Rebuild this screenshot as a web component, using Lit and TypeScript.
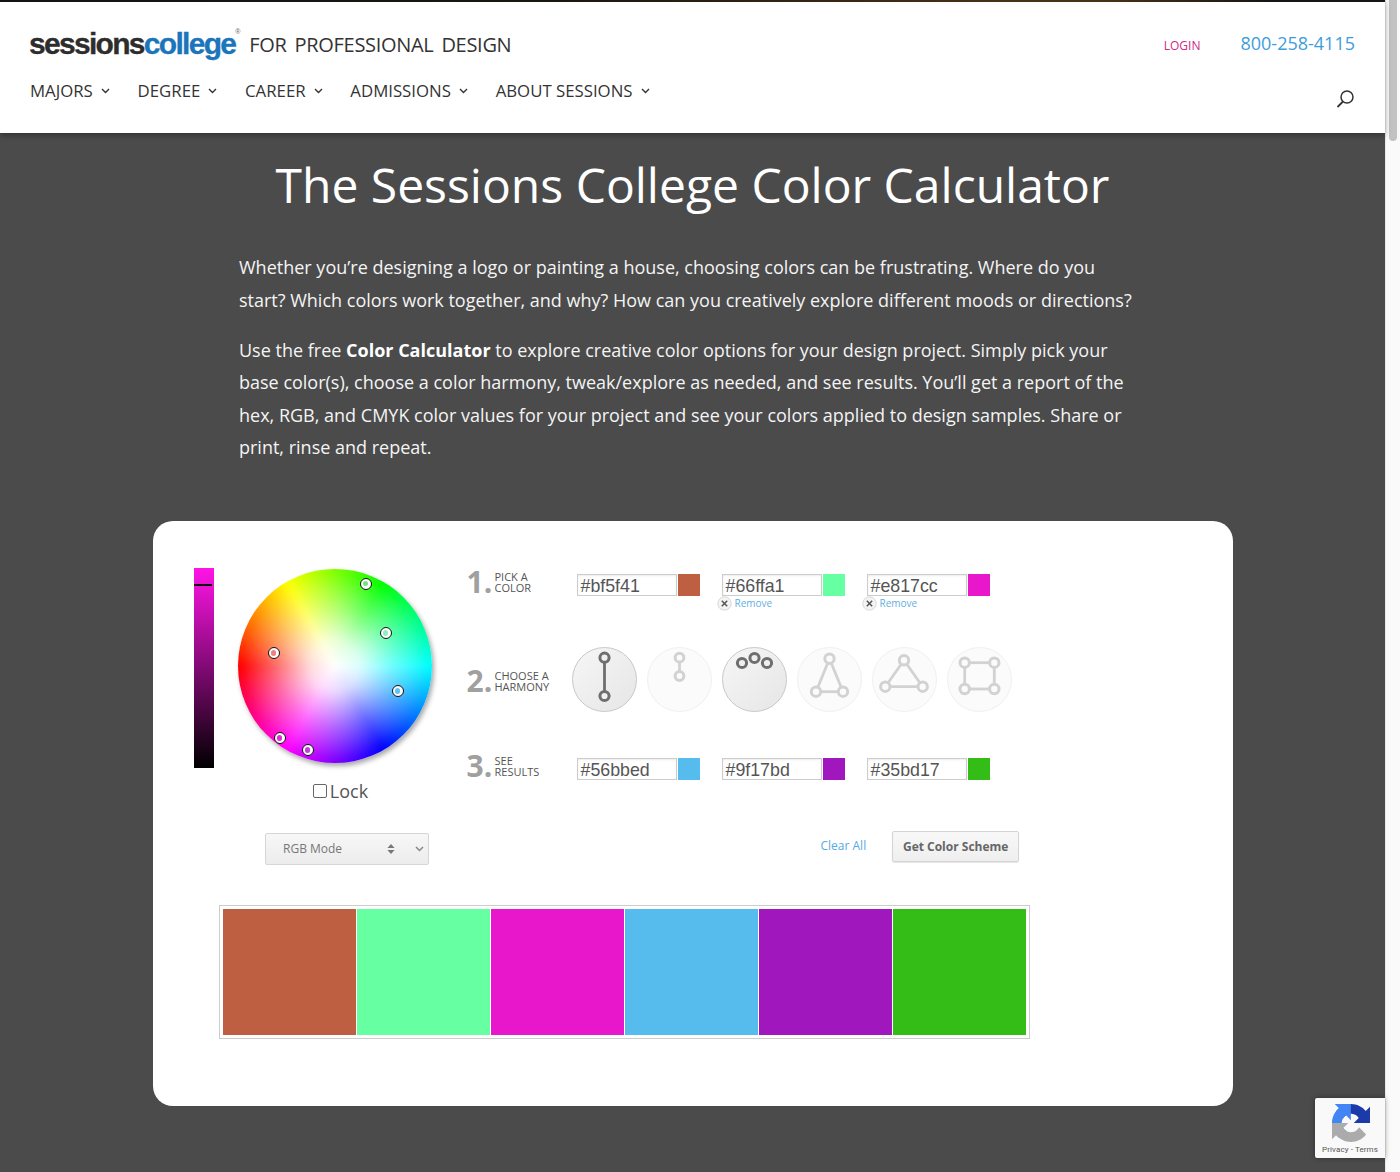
import { LitElement, html, css, svg } from "lit";
import { customElement } from "lit/decorators.js";

const NAV = ["MAJORS", "DEGREE", "CAREER", "ADMISSIONS", "ABOUT SESSIONS"];
const PICK = [
  { hex: "#bf5f41", remove: false },
  { hex: "#66ffa1", remove: true },
  { hex: "#e817cc", remove: true },
];
const RESULT = ["#56bbed", "#9f17bd", "#35bd17"];
const PALETTE = ["#bf5f41", "#66ffa1", "#e817cc", "#56bbed", "#9f17bd", "#35bd17"];
const DOTS = [
  { x: 128, y: 14.5, c: "#72e27c" },
  { x: 148, y: 64, c: "#8ff0bc" },
  { x: 36, y: 84, c: "#ee8080" },
  { x: 160, y: 122, c: "#62c4f0" },
  { x: 42, y: 169, c: "#e02cd0" },
  { x: 70, y: 181, c: "#c23ce0" },
];

const node = (x: number, y: number, r: number, fill: string) =>
  svg`<circle cx=${x} cy=${y} r=${r} fill=${fill} stroke="currentColor" stroke-width="3"/>`;
const line = (a: number, b: number, c: number, d: number) =>
  svg`<line x1=${a} y1=${b} x2=${c} y2=${d} stroke="currentColor" stroke-width="2.8"/>`;

const ON = "#efefef";
const OFF = "#fbfbfb";
const HARMONIES = [
  { active: true, art: svg`${line(32.5, 10.7, 32.5, 49)}${node(32.5, 10.7, 4.6, ON)}${node(32.5, 49, 4.6, ON)}` },
  { active: false, art: svg`${line(32.5, 10.7, 32.5, 29)}${node(32.5, 10.7, 4.4, OFF)}${node(32.5, 29, 4.4, OFF)}` },
  { active: true, art: svg`${node(20, 16, 4.6, ON)}${node(32.5, 11, 4.6, ON)}${node(45, 16, 4.6, ON)}` },
  { active: false, art: svg`${line(32.5, 11.7, 19, 44.7)}${line(32.5, 11.7, 46, 44.7)}${line(19, 44.7, 46, 44.7)}${node(32.5, 11.7, 4.7, OFF)}${node(19, 44.7, 4.7, OFF)}${node(46, 44.7, 4.7, OFF)}` },
  { active: false, art: svg`${line(32, 13.3, 13.3, 39.7)}${line(32, 13.3, 50.7, 39.7)}${line(13.3, 39.7, 50.7, 39.7)}${node(32, 13.3, 4.7, OFF)}${node(13.3, 39.7, 4.7, OFF)}${node(50.7, 39.7, 4.7, OFF)}` },
  { active: false, art: svg`${line(17.7, 15.7, 47.3, 15.7)}${line(17.7, 42, 47.3, 42)}${line(17.7, 15.7, 17.7, 42)}${line(47.3, 15.7, 47.3, 42)}${node(17.7, 15.7, 4.7, OFF)}${node(47.3, 15.7, 4.7, OFF)}${node(17.7, 42, 4.7, OFF)}${node(47.3, 42, 4.7, OFF)}` },
];

@customElement("app-root")
export class AppRoot extends LitElement {
  static styles = css`
    :host {
      display: flex;
      position: relative;
      width: 1400px;
      height: 1172px;
      overflow: hidden;
      font-family: "Open Sans", "Liberation Sans", sans-serif;
      background: #4b4b4b;
    }
    .page { width: 1385px; flex: none; }
    .scrollbar {
      width: 15px;
      flex: none;
      box-sizing: border-box;
      background: #fafafa;
      border-left: 1px solid #e8e8e8;
      padding-left: 3px;
    }
    .thumb { width: 8px; height: 141px; border-radius: 0 0 5px 5px; background: #c2c2c2; }

    header {
      position: relative;
      box-sizing: border-box;
      height: 133px;
      background: #fff;
      box-shadow: 0 2px 6px rgba(0, 0, 0, 0.35);
      padding: 0 30px;
    }
    .strip {
      height: 2px;
      margin: 0 -30px;
      background: linear-gradient(90deg, #141414, #1a1610 40%, #4a3016 72%, #4a3016 80%, #151515 92%);
    }
    .head-top { display: flex; align-items: center; height: 62px; padding-top: 20px; box-sizing: border-box; }
    .logo {
      font-family: "Liberation Sans", sans-serif;
      font-weight: 700;
      font-size: 30px;
      letter-spacing: -1.7px;
      color: #2d2d2d;
      line-height: 30px;
      position: relative;
      margin: 2px 0 0 -1px;
      -webkit-text-stroke: 0.3px currentColor;
    }
    .logo b { color: #1b75bb; font-weight: 700; }
    .logo sup { font-size: 7px; letter-spacing: 0; color: #666; position: absolute; top: -2px; right: -5px; line-height: 10px; font-weight: 400; -webkit-text-stroke: 0; }
    .tag { font-size: 20px; color: #333; margin-left: 14px; word-spacing: 3px; line-height: 30px; letter-spacing: -0.3px; margin-top: 4px; }
    .login { margin-left: auto; font-size: 12px; color: #cf2a85; margin-top: 4px; }
    .phone { margin-left: 40px; font-size: 18px; color: #3e9ddb; margin-top: -1px; }
    nav { display: flex; gap: 27.75px; align-items: center; height: 24px; margin-top: 14px; }
    .nav-item { display: flex; align-items: center; gap: 8px; font-size: 16.8px; color: #333; }
    .nav-item svg { width: 9px; height: 6px; margin-top: 1px; }
    .search { position: absolute; right: 30px; top: 89px; width: 19px; height: 19px; }

    main { display: flex; flex-direction: column; align-items: center; }
    h1 {
      margin: 19px 0 0;
      font-weight: 400;
      font-size: 48px;
      line-height: 65px;
      color: #fff;
      text-align: center;
    }
    .intro { width: 907px; margin-top: 34.4px; color: #f4f4f4; font-size: 18px; line-height: 32.4px; }
    .intro p { margin: 0 0 17.5px; }
    .intro strong { font-weight: 700; color: #fff; }

    .card {
      box-sizing: border-box;
      width: 1080px;
      height: 585px;
      margin-top: 40.2px;
      border-radius: 20px;
      background: #fff;
      padding: 47px 41px 0;
    }
    .tool { display: flex; height: 263px; }
    .value {
      position: relative;
      width: 20px;
      height: 200px;
      flex: none;
      background: linear-gradient(#ff14e6, #000);
    }
    .value i { position: absolute; left: 0; top: 16px; width: 18px; height: 1.5px; background: #111; }
    .wheel-col { margin-left: 24px; width: 194px; flex: none; display: flex; flex-direction: column; align-items: center; }
    .wheel {
      position: relative;
      width: 194px;
      height: 194px;
      margin-top: 1px;
      border-radius: 50%;
      box-shadow: 2px 3px 5px rgba(0, 0, 0, 0.35);
    }
    .hues {
      position: absolute;
      inset: 0;
      overflow: hidden;
      border-radius: 50%;
    }
    .hues::before {
      content: "";
      position: absolute;
      inset: -8px;
      background:
        radial-gradient(circle closest-side, #fff 0%, rgba(255, 255, 255, 0.85) 24%, rgba(255, 255, 255, 0.42) 56%, rgba(255, 255, 255, 0) 90%),
        conic-gradient(from 270deg, #f00, #ff0 60deg, #0f0 120deg, #0ff 180deg, #00f 240deg, #f0f 300deg, #f00 360deg);
      filter: blur(3px);
    }
    .dot {
      position: absolute;
      box-sizing: border-box;
      width: 12px;
      height: 12px;
      margin: -6px 0 0 -6px;
      border-radius: 50%;
      border: 1px solid #111;
      background: #fff;
      display: grid;
      place-items: center;
    }
    .dot i { width: 5.5px; height: 5.5px; border-radius: 50%; }
    .lock { display: flex; align-items: center; gap: 3px; margin: 16px 0 0 12px; font-size: 18px; color: #555; line-height: 24px; }
    .lock span.box { width: 12px; height: 12px; border: 1px solid #666; border-radius: 2px; background: #fff; }

    .steps { margin-left: 35px; padding-top: 6px; }
    .step { display: flex; }
    .step-label { display: flex; width: 110px; flex: none; color: #9a9a9a; }
    .num { font-size: 30px; font-weight: 700; line-height: 22px; width: 28px; margin-top: -3px; color: #a0a0a0; }
    .cap { font-size: 11px; line-height: 11px; color: #555; text-transform: uppercase; margin-top: -3px; }
    .fields { display: flex; gap: 22px; }
    .field { width: 123px; }
    .field-top { display: flex; gap: 1px; height: 22px; }
    .hex {
      box-sizing: border-box;
      width: 100px;
      height: 22px;
      border: 1px solid #ccc;
      box-shadow: inset 0 1px 2px rgba(0, 0, 0, 0.08);
      font-family: "Liberation Sans", sans-serif;
      font-size: 17.8px;
      line-height: 22px;
      color: #555;
      padding-left: 3px;
    }
    .swatch { width: 22px; height: 22px; }
    .remove { display: flex; align-items: center; gap: 3px; margin: 0 0 1px -5px; height: 14px; font-size: 10px; color: #5fb0e3; }
    .remove svg { width: 15px; height: 15px; }
    .step-two { margin-top: 36px; align-items: flex-start; }
    .step-two .step-label { width: 105px; padding-top: 26px; }
    .harmonies { display: flex; gap: 10px; }
    .harmony {
      width: 65px;
      height: 65px;
      box-sizing: border-box;
      border-radius: 50%;
      color: #d2d2d2;
      background: #fbfbfb;
      border: 1px solid #f0f0f0;
    }
    .harmony.on {
      color: #6e6e6e;
      background: linear-gradient(135deg, #f6f6f6, #e6e6e6);
      border-color: #c8c8c8;
    }
    .harmony svg { display: block; width: 65px; height: 65px; margin: -1px; }
    .step-three { margin-top: 46px; }

    .actions { display: flex; align-items: flex-start; height: 74px; }
    .select {
      box-sizing: border-box;
      display: flex;
      align-items: center;
      width: 164px;
      height: 32px;
      margin: 2px 0 0 71px;
      border: 1px solid #d6d6d6;
      border-radius: 2px;
      background: linear-gradient(#f7f7f7, #ececec);
      padding: 0 0 1px 17.5px;
      font-size: 12px;
      color: #777;
    }
    .select .updown { margin-left: auto; width: 8px; height: 10px; }
    .select .chev { margin: 0 4px 0 20px; width: 9px; height: 6px; }
    .clear { margin: 7px 0 0 392px; font-size: 12px; color: #54aae2; line-height: 15px; }
    .btn {
      box-sizing: border-box;
      margin-left: 26px;
      width: 127px;
      height: 31px;
      border: 1px solid #d4d4d4;
      border-radius: 2px;
      background: linear-gradient(#f8f8f8, #efefef);
      box-shadow: 0 1px 1px rgba(0, 0, 0, 0.1);
      font-size: 12px;
      font-weight: 700;
      color: #666;
      line-height: 29px;
      text-align: center;
    }
    .palette {
      box-sizing: border-box;
      display: flex;
      gap: 1px;
      width: 811px;
      height: 134px;
      margin: 0 0 0 25px;
      border: 1px solid #ccc;
      padding: 3px;
    }
    .palette div { width: 133px; height: 126px; }

    .badge {
      position: absolute;
      left: 1315px;
      top: 1098px;
      box-sizing: border-box;
      width: 70px;
      height: 60px;
      background: #f9f9f9;
      box-shadow: 0 0 5px rgba(0, 0, 0, 0.4);
      border-radius: 2px 0 0 2px;
      text-align: center;
      font-family: Roboto, "Liberation Sans", sans-serif;
      font-size: 8px;
      color: #555;
      padding-top: 6px;
    }
    .badge svg { display: block; width: 38px; height: 38px; margin: 0 0 0 16.5px; }
    .badge span { display: block; margin-top: 3px; line-height: 10px; letter-spacing: 0.1px; }
  `;

  private field(hex: string, remove: boolean) {
    return html`<div class="field">
      <div class="field-top">
        <div class="hex">${hex}</div>
        <div class="swatch" style="background:${hex}"></div>
      </div>
      ${remove
        ? html`<div class="remove">
            <svg viewBox="0 0 15 15">
              <circle cx="7.5" cy="7.5" r="6.7" fill="#f4f4f4" stroke="#d8d8d8" />
              <path d="M4.8 4.8l5.4 5.4M10.2 4.8l-5.4 5.4" stroke="#555" stroke-width="1.5" />
            </svg>
            Remove
          </div>`
        : ""}
    </div>`;
  }

  render() {
    return html`
      <div class="page">
        <header>
          <div class="strip"></div>
          <div class="head-top">
            <div class="logo">sessions<b>college</b><sup>®</sup></div>
            <div class="tag">FOR PROFESSIONAL DESIGN</div>
            <div class="login">LOGIN</div>
            <div class="phone">800-258-4115</div>
          </div>
          <nav>
            ${NAV.map(
              (n) => html`<div class="nav-item">
                ${n}
                <svg viewBox="0 0 9 6"><path d="M1 1l3.5 3.5L8 1" fill="none" stroke="#333" stroke-width="1.4" /></svg>
              </div>`,
            )}
          </nav>
          <svg class="search" viewBox="0 0 19 19">
            <circle cx="11" cy="8" r="6" fill="none" stroke="#333" stroke-width="1.5" />
            <path d="M7 12.5L1.5 18" stroke="#333" stroke-width="1.8" />
          </svg>
        </header>
        <main>
          <h1>The Sessions College Color Calculator</h1>
          <div class="intro">
            <p>
              Whether you’re designing a logo or painting a house, choosing colors can be frustrating. Where do you
              start? Which colors work together, and why? How can you creatively explore different moods or directions?
            </p>
            <p>
              Use the free <strong>Color Calculator</strong> to explore creative color options for your design project.
              Simply pick your base color(s), choose a color harmony, tweak/explore as needed, and see results. You’ll
              get a report of the hex, RGB, and CMYK color values for your project and see your colors applied to design
              samples. Share or print, rinse and repeat.
            </p>
          </div>
          <section class="card">
            <div class="tool">
              <div class="value"><i></i></div>
              <div class="wheel-col">
                <div class="wheel">
                  <div class="hues"></div>
                  ${DOTS.map(
                    (d) => html`<div class="dot" style="left:${d.x}px;top:${d.y}px"><i style="background:${d.c}"></i></div>`,
                  )}
                </div>
                <div class="lock"><span class="box"></span>Lock</div>
              </div>
              <div class="steps">
                <div class="step">
                  <div class="step-label"><div class="num">1.</div><div class="cap">Pick a<br />color</div></div>
                  <div class="fields">${PICK.map((p) => this.field(p.hex, p.remove))}</div>
                </div>
                <div class="step step-two">
                  <div class="step-label"><div class="num">2.</div><div class="cap">Choose a<br />harmony</div></div>
                  <div class="harmonies">
                    ${HARMONIES.map(
                      (h) => html`<div class="harmony ${h.active ? "on" : ""}"><svg viewBox="0 0 65 65">${h.art}</svg></div>`,
                    )}
                  </div>
                </div>
                <div class="step step-three">
                  <div class="step-label"><div class="num">3.</div><div class="cap">See<br />results</div></div>
                  <div class="fields">${RESULT.map((r) => this.field(r, false))}</div>
                </div>
              </div>
            </div>
            <div class="actions">
              <div class="select">
                RGB Mode
                <svg class="updown" viewBox="0 0 8 10"><path d="M4 0l3.6 4H.4zM4 10L.4 6h7.2z" fill="#777" /></svg>
                <svg class="chev" viewBox="0 0 9 6"><path d="M1 1l3.5 3.5L8 1" fill="none" stroke="#888" stroke-width="1.5" /></svg>
              </div>
              <div class="clear">Clear All</div>
              <div class="btn">Get Color Scheme</div>
            </div>
            <div class="palette">${PALETTE.map((c) => html`<div style="background:${c}"></div>`)}</div>
          </section>
        </main>
      </div>
      <div class="scrollbar"><div class="thumb"></div></div>
      <div class="badge">
        <svg viewBox="0 0 64 64">
          <path d="M64 31.955l-.033-1.37V4.687l-7.16 7.16C50.948 4.674 42.033.093 32.05.093c-10.4 0-19.622 4.96-25.458 12.64l11.736 11.86a15.55 15.55 0 0 1 4.754-5.334c2.05-1.6 4.952-2.906 8.968-2.906.485 0 .86.057 1.135.163 4.976.393 9.288 3.14 11.828 7.124l-8.307 8.307c10.522-.04 22.4-.066 27.295.006" fill="#1c3aa9" />
          <path d="M31.862.002l-1.37.033H4.594l7.16 7.16C4.58 13.054 0 21.97 0 31.953c0 10.4 4.96 19.622 12.64 25.458L24.5 45.675a15.55 15.55 0 0 1-5.334-4.754c-1.6-2.05-2.906-4.952-2.906-8.968 0-.485.057-.86.163-1.135.393-4.976 3.14-9.288 7.124-11.828l8.307 8.307c-.04-10.522-.066-22.4.006-27.295" fill="#4285f4" />
          <path d="M.002 31.953l.033 1.37v25.898l7.16-7.16c5.86 7.173 14.774 11.754 24.76 11.754 10.4 0 19.622-4.96 25.458-12.64l-11.736-11.86a15.55 15.55 0 0 1-4.754 5.334c-2.05 1.6-4.952 2.906-8.968 2.906-.485 0-.86-.057-1.135-.163-4.976-.393-9.288-3.14-11.828-7.124l8.307-8.307c-10.522.04-22.4.066-27.295-.006" fill="#ababab" />
        </svg>
        <span>Privacy - Terms</span>
      </div>
    `;
  }
}
